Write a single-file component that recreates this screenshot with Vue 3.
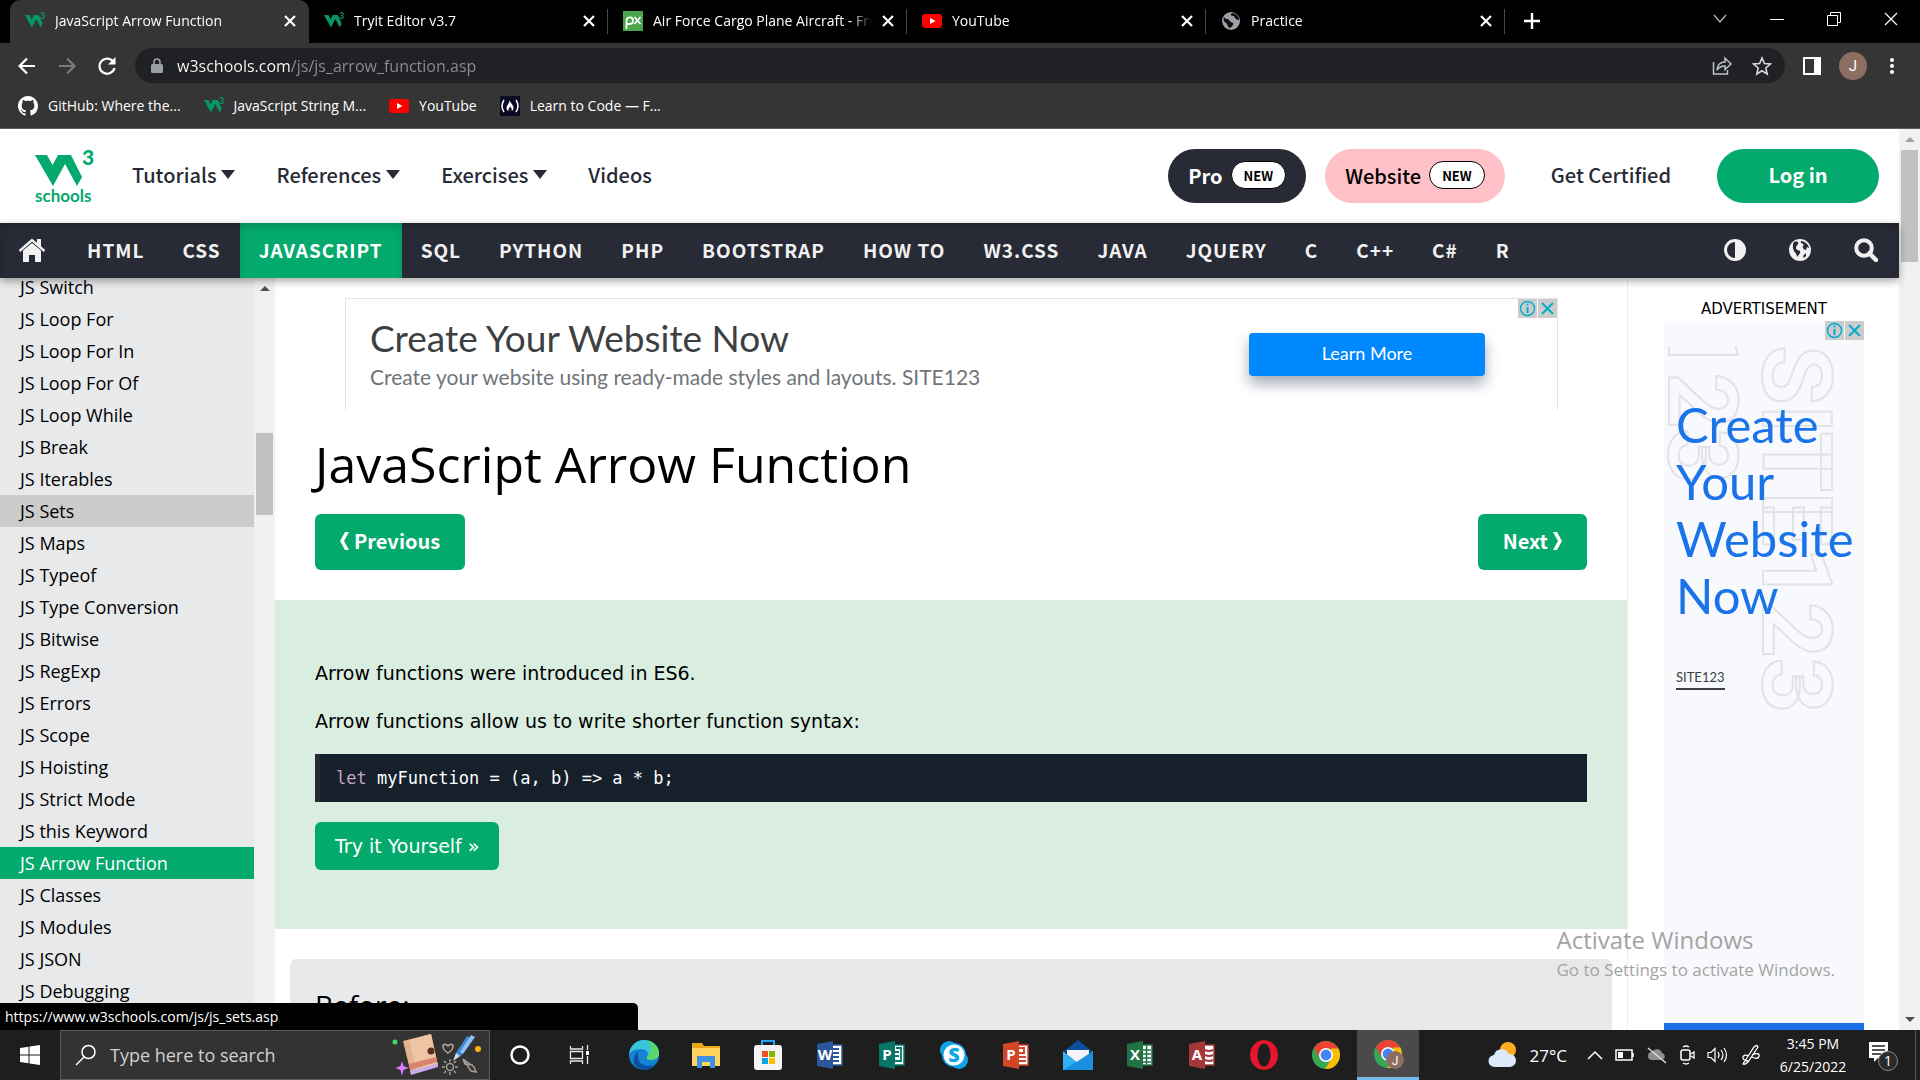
<script setup>
const tabs = [
  { icon: 'w3', title: 'JavaScript Arrow Function', active: true },
  { icon: 'w3', title: 'Tryit Editor v3.7' },
  { icon: 'px', title: 'Air Force Cargo Plane Aircraft - Free photo' },
  { icon: 'yt', title: 'YouTube' },
  { icon: 'globe', title: 'Practice' },
]

const bookmarks = [
  { icon: 'github', title: 'GitHub: Where the...' },
  { icon: 'w3', title: 'JavaScript String M...' },
  { icon: 'yt', title: 'YouTube' },
  { icon: 'fcc', title: 'Learn to Code — F...' },
]

const menus = ['Tutorials', 'References', 'Exercises']

const topics = [
  'HTML', 'CSS', 'JAVASCRIPT', 'SQL', 'PYTHON', 'PHP', 'BOOTSTRAP', 'HOW TO',
  'W3.CSS', 'JAVA', 'JQUERY', 'C', 'C++', 'C#', 'R',
]

const lessons = [
  'JS Switch', 'JS Loop For', 'JS Loop For In', 'JS Loop For Of', 'JS Loop While',
  'JS Break', 'JS Iterables', 'JS Sets', 'JS Maps', 'JS Typeof', 'JS Type Conversion',
  'JS Bitwise', 'JS RegExp', 'JS Errors', 'JS Scope', 'JS Hoisting', 'JS Strict Mode',
  'JS this Keyword', 'JS Arrow Function', 'JS Classes', 'JS Modules', 'JS JSON',
  'JS Debugging',
]

const apps = [
  { id: 'edge' }, { id: 'explorer' }, { id: 'store' },
  { id: 'office', letter: 'W', color: '#2b579a', name: 'Word' },
  { id: 'office', letter: 'P', color: '#077568', name: 'Publisher' },
  { id: 'skype' },
  { id: 'office', letter: 'P', color: '#d24726', name: 'PowerPoint' },
  { id: 'mail' },
  { id: 'office', letter: 'X', color: '#217346', name: 'Excel' },
  { id: 'office', letter: 'A', color: '#a4373a', name: 'Access' },
  { id: 'opera' }, { id: 'chrome' }, { id: 'chrome', active: true },
]
</script>

<template>
  <div class="screen">
    <svg class="defs" aria-hidden="true">
      <defs>
        <symbol id="w3" viewBox="0 0 20 20">
          <path d="M0 4h4.500l2.200 4.500 2-4.500h5l4 8.500-2 4-4.300-8.500-4.500 8.500z" fill="#059862" />
          <text x="15" y="8" font-size="9" font-weight="700" font-family="Lato, sans-serif" fill="#059862">3</text>
        </symbol>
        <symbol id="yt" viewBox="0 0 20 20">
          <rect x="0" y="3" width="20" height="14" rx="3" fill="#f00" />
          <path d="M8 7l5.500 3L8 13z" fill="#fff" />
        </symbol>
        <symbol id="px" viewBox="0 0 20 20">
          <rect width="20" height="20" fill="#4aa54a" />
          <path d="M3.500 18V9.500a3.300 3.300 0 1 1 3.300 3.500H4M11.500 6l6 7M17.500 6l-6 7" fill="none" stroke="#fff" stroke-width="1.800" />
        </symbol>
        <symbol id="globe" viewBox="0 0 20 20">
          <circle cx="10" cy="10" r="9" fill="#9aa0a6" />
          <path d="M3 6c2 3 4 1 5 3s3 2 4 3-1 4-3 5c-3-1-2-4-4-5s-3-3-2-6zM11 2c-2 1-1 3 1 3s1 2 3 3 3 2 3 0-3-6-7-6z" fill="#111" />
        </symbol>
        <symbol id="github" viewBox="0 0 16 16">
          <path fill="#fff" d="M8 0C3.580 0 0 3.580 0 8c0 3.540 2.290 6.530 5.470 7.590.4.070.55-.17.55-.38 0-.19-.01-.82-.01-1.490-2.010.37-2.530-.49-2.690-.94-.09-.23-.48-.94-.82-1.130-.28-.15-.68-.52-.01-.53.63-.01 1.080.58 1.230.82.72 1.210 1.870.87 2.330.66.07-.52.28-.87.51-1.070-1.780-.2-3.640-.89-3.640-3.950 0-.87.31-1.590.82-2.150-.08-.2-.36-1.020.08-2.120 0 0 .67-.21 2.200.82.64-.18 1.320-.27 2-.27s1.360.09 2 .27c1.530-1.040 2.200-.82 2.200-.82.44 1.100.16 1.920.08 2.120.51.56.82 1.270.82 2.150 0 3.070-1.870 3.750-3.650 3.950.29.25.54.73.54 1.480 0 1.070-.01 1.930-.01 2.200 0 .21.15.46.55.38A8.010 8.010 0 0 0 16 8c0-4.420-3.580-8-8-8z" />
        </symbol>
        <symbol id="fcc" viewBox="0 0 20 20">
          <rect width="20" height="20" fill="#0a0a23" />
          <path d="M4 4Q0 10 4 16M16 4q4 6 0 12" fill="none" stroke="#fff" stroke-width="1.500" />
          <path d="M9.500 4c.5 3 4 4.500 4 8 0 1.500-.8 2.500-2 3 1-2-.5-3-1.500-4.500-.5 2-2 2.500-1.500 4.500-1.200-.5-2-1.500-2-3 0-3 3-4 3-8z" fill="#fff" />
        </symbol>
      </defs>
    </svg>

    <!-- Browser window -->
    <header class="browser">
      <div class="tabstrip">
        <div v-for="(t, i) in tabs" :key="i" class="tab" :class="{ active: t.active }">
          <svg class="fav" aria-hidden="true"><use :href="'#' + t.icon" /></svg>
          <span class="tab-title">{{ t.title }}</span>
          <button class="plain" aria-label="Close tab">
            <svg width="12" height="12" viewBox="0 0 12 12"><path d="M1 1l10 10M11 1L1 11" stroke="#fff" stroke-width="2.200" /></svg>
          </button>
        </div>
        <button class="plain new-tab" aria-label="New tab">
          <svg width="16" height="16" viewBox="0 0 16 16"><path d="M8 0v16M0 8h16" stroke="#fff" stroke-width="2.400" /></svg>
        </button>
        <div class="window-buttons">
          <button class="plain" aria-label="Search tabs"><svg width="14" height="14" viewBox="0 0 14 14"><path d="M1 3l6 7 6-7" fill="none" stroke="#bbb" stroke-width="1.300" /></svg></button>
          <button class="plain" aria-label="Minimize"><svg width="14" height="14" viewBox="0 0 14 14"><path d="M0 7.500h14" stroke="#fff" /></svg></button>
          <button class="plain" aria-label="Restore"><svg width="14" height="14" viewBox="0 0 14 14"><path d="M.5 3.500h10v10H.5zM3.500 3V.5h10v10H11" fill="none" stroke="#fff" /></svg></button>
          <button class="plain" aria-label="Close"><svg width="14" height="14" viewBox="0 0 14 14"><path d="M1 1l12 12M13 1L1 13" stroke="#fff" stroke-width="1.200" /></svg></button>
        </div>
      </div>

      <div class="toolbar">
        <button class="plain tool" aria-label="Back"><svg width="18" height="18" viewBox="0 0 18 18"><path d="M17 9H2M9 1.500L1.500 9 9 16.500" fill="none" stroke="#fff" stroke-width="2.200" /></svg></button>
        <button class="plain tool" aria-label="Forward"><svg width="18" height="18" viewBox="0 0 18 18"><path d="M1 9h15M9 1.500L16.500 9 9 16.500" fill="none" stroke="#7b7b7b" stroke-width="2.200" /></svg></button>
        <button class="plain tool" aria-label="Reload"><svg width="18" height="18" viewBox="0 0 18 18"><path d="M15.500 5A7.600 7.600 0 1 0 16.500 11" fill="none" stroke="#fff" stroke-width="2.200" /><path d="M17.500 0v7.500H10z" fill="#fff" /></svg></button>
        <div class="omnibox">
          <svg width="12" height="16" viewBox="0 0 12 16" aria-hidden="true"><rect y="6" width="12" height="9" rx="1.500" fill="#9aa0a6" /><path d="M3 7V4a3 3 0 0 1 6 0v3" fill="none" stroke="#9aa0a6" stroke-width="1.600" /></svg>
          <input class="url" type="text" aria-label="Address" value="w3schools.com/js/js_arrow_function.asp" />
          <button class="plain" aria-label="Share"><svg width="20" height="20" viewBox="0 0 20 20"><path d="M1.500 6v12h14v-4M5 14c.5-5 3.500-8 8-8V2l6 6-6 5.500V10c-3.500 0-6 1-8 4z" fill="none" stroke="#bdc1c6" stroke-width="1.500" /></svg></button>
          <button class="plain" aria-label="Bookmark"><svg width="20" height="20" viewBox="0 0 20 20"><path d="M10 2l2.400 5.500 6 .5-4.600 4 1.400 6L10 14.800 4.800 18l1.400-6L1.600 8l6-.5z" fill="none" stroke="#d5d7d9" stroke-width="1.600" /></svg></button>
        </div>
        <button class="plain tool" aria-label="Side panel"><svg width="18" height="18" viewBox="0 0 18 18"><rect width="18" height="18" fill="#fff" /><rect x="2" y="2" width="9" height="14" fill="#353535" /></svg></button>
        <button class="plain avatar" aria-label="Profile">J</button>
        <button class="plain tool" aria-label="Menu"><svg width="6" height="18" viewBox="0 0 6 18"><circle cx="3" cy="3" r="2" fill="#fff" /><circle cx="3" cy="9" r="2" fill="#fff" /><circle cx="3" cy="15" r="2" fill="#fff" /></svg></button>
      </div>

      <nav class="bookmarks" aria-label="Bookmarks">
        <a v-for="b in bookmarks" :key="b.title" href="#">
          <svg class="fav" aria-hidden="true"><use :href="'#' + b.icon" /></svg>{{ b.title }}
        </a>
      </nav>
    </header>

    <!-- Web page -->
    <div class="viewport">
      <div class="page">
        <div class="site-header">
          <a class="logo" href="#" aria-label="w3schools">
            <svg width="60" height="56" viewBox="0 0 60 56">
              <path d="M1 7h12l5.500 10L24 7h13l11 22-5 9-12-22-12 22z" fill="#04aa6d" />
              <text x="48" y="17" font-size="21" font-weight="900" font-family="Lato, sans-serif" fill="#04aa6d">3</text>
              <text x="1" y="54" font-size="17" font-weight="700" font-family="Lato, sans-serif" fill="#04aa6d">schools</text>
            </svg>
          </a>
          <a v-for="m in menus" :key="m" class="menu" href="#">{{ m }}<svg width="14" height="9" viewBox="0 0 14 9" aria-hidden="true"><path d="M0 0h14L7 9z" fill="#282a35" /></svg></a>
          <a class="menu" href="#">Videos</a>
          <div class="header-right">
            <a class="pill dark" href="#">Pro <span class="new">NEW</span></a>
            <a class="pill pink" href="#">Website <span class="new">NEW</span></a>
            <a class="certified" href="#">Get Certified</a>
            <button class="login">Log in</button>
          </div>
        </div>

        <nav class="topnav" aria-label="Topics">
          <a class="home" href="#" aria-label="Home"><svg width="28" height="24" viewBox="0 0 28 24"><path d="M14 5l9 7.500V24h-6v-7h-6v7H5V12.500z" fill="#f1f1f1" /><path d="M1.500 13L14 2l12.500 11" fill="none" stroke="#f1f1f1" stroke-width="2.400" /><path d="M19 1h4v8l-4-3.500z" fill="#f1f1f1" /></svg></a>
          <a v-for="t in topics" :key="t" href="#" :class="{ current: t === 'JAVASCRIPT' }">{{ t }}</a>
          <div class="nav-tools">
            <button class="plain" aria-label="Toggle dark code"><svg width="22" height="22" viewBox="0 0 22 22"><circle cx="11" cy="11" r="9.500" fill="none" stroke="#f1f1f1" stroke-width="3" /><path d="M11 1a10 10 0 0 1 0 20z" fill="#f1f1f1" /></svg></button>
            <button class="plain" aria-label="Translate"><svg width="22" height="22" viewBox="0 0 22 22"><circle cx="11" cy="11" r="11" fill="#f1f1f1" /><path d="M5 3c3-1 5 0 4 2S7 7 7 9s3 2 4 3-1 4-3 6c0-3-2-4-3-6S3 6 5 3zM12 2c4 0 8 4 8 7l-2-1-1 3c-2 0-4-2-3-4s1-1 0-2-3-1-2-3zM14 17l3-3v3l-2 2z" fill="#282a35" /></svg></button>
            <button class="plain" aria-label="Search"><svg width="24" height="24" viewBox="0 0 24 24"><circle cx="10" cy="10" r="7.800" fill="none" stroke="#f1f1f1" stroke-width="4" /><path d="M15.500 15.500l6.500 6.500" stroke="#f1f1f1" stroke-width="4.500" stroke-linecap="round" /></svg></button>
          </div>
        </nav>

        <div class="columns">
          <aside class="sidebar">
            <ul class="lessons">
              <li v-for="l in lessons" :key="l">
                <a href="#" :class="{ hovered: l === 'JS Sets', current: l === 'JS Arrow Function' }">{{ l }}</a>
              </li>
            </ul>
          </aside>
          <div class="scrollbar side-scroll" aria-hidden="true">
            <i class="arrow-up"></i><i class="thumb"></i>
          </div>

          <main class="content">
            <section class="banner">
              <div class="banner-text">
                <div class="banner-title">Create Your Website Now</div>
                <div class="banner-sub">Create your website using ready-made styles and layouts. SITE123</div>
              </div>
              <button class="learn">Learn More</button>
              <div class="ad-marks">
                <svg width="19" height="19" viewBox="0 0 19 19"><rect width="19" height="19" fill="#ccc" /><circle cx="9.500" cy="9.500" r="7" fill="none" stroke="#00aecd" stroke-width="1.500" /><path d="M9.500 8v6M9.500 4.500v2" stroke="#00aecd" stroke-width="2" /></svg>
                <svg width="19" height="19" viewBox="0 0 19 19"><rect width="19" height="19" fill="#ccc" /><path d="M4 4l11 11M15 4L4 15" stroke="#00aecd" stroke-width="2" /></svg>
              </div>
            </section>

            <h1>JavaScript Arrow Function</h1>
            <div class="pager">
              <a class="btn" href="#"><svg width="9" height="18" viewBox="0 0 9 18" aria-hidden="true"><path d="M5 0h4L4 9l5 9H5L0 9z" fill="#fff" /></svg>Previous</a>
              <a class="btn" href="#">Next<svg width="9" height="18" viewBox="0 0 9 18" aria-hidden="true"><path d="M4 0H0l5 9-5 9h4l5-9z" fill="#fff" /></svg></a>
            </div>

            <section class="intro">
              <p>Arrow functions were introduced in ES6.</p>
              <p>Arrow functions allow us to write shorter function syntax:</p>
              <pre class="code"><span class="kw">let</span> myFunction = (a, b) =&gt; a * b;</pre>
              <a class="try" href="#">Try it Yourself »</a>
            </section>

            <section class="example"><h3>Before:</h3></section>
          </main>

          <aside class="ads">
            <div class="ads-label">ADVERTISEMENT</div>
            <div class="sky">
              <svg class="outline" width="200" height="400" viewBox="0 0 200 400" aria-hidden="true">
                <defs><clipPath id="cut"><rect y="25" width="200" height="375" /></clipPath></defs>
                <g fill="none" stroke="#e1e3e6" stroke-width="2" font-family="Roboto, sans-serif" font-weight="700" font-size="97">
                  <text transform="translate(99 24) rotate(90)">SITE123</text>
                  <g clip-path="url(#cut)"><text transform="translate(5 -4) rotate(90)">123</text></g>
                </g>
              </svg>
              <div class="ad-marks">
                <svg width="19" height="19" viewBox="0 0 19 19"><rect width="19" height="19" fill="#ccc" /><circle cx="9.500" cy="9.500" r="7" fill="none" stroke="#00aecd" stroke-width="1.500" /><path d="M9.500 8v6M9.500 4.500v2" stroke="#00aecd" stroke-width="2" /></svg>
                <svg width="19" height="19" viewBox="0 0 19 19"><rect width="19" height="19" fill="#ccc" /><path d="M4 4l11 11M15 4L4 15" stroke="#00aecd" stroke-width="2" /></svg>
              </div>
              <div class="sky-title">Create<br />Your<br />Website<br />Now</div>
              <a class="sky-link" href="#">SITE123</a>
              <div class="sky-cta"></div>
            </div>
          </aside>
        </div>
      </div>
      <div class="scrollbar page-scroll" aria-hidden="true">
        <i class="arrow-up"></i><i class="thumb"></i><i class="arrow-down"></i>
      </div>

      <div class="status">https://www.w3schools.com/js/js_sets.asp</div>
      <div class="activate">
        <div class="activate-title">Activate Windows</div>
        <div>Go to Settings to activate Windows.</div>
      </div>
    </div>

    <!-- Windows taskbar -->
    <footer class="taskbar">
      <button class="plain start" aria-label="Start"><svg width="20" height="20" viewBox="0 0 20 20"><path d="M0 3l8.500-1.300v7.800H0zM9.500 1.500L20 0v9.500H9.500zM0 10.500h8.500v7.800L0 17zM9.500 10.500H20V20L9.500 18.500z" fill="#fff" /></svg></button>
      <label class="search">
        <svg width="22" height="22" viewBox="0 0 22 22" aria-hidden="true"><circle cx="13.500" cy="8" r="6.500" fill="none" stroke="#fff" stroke-width="1.500" /><path d="M9 13l-8 8" stroke="#fff" stroke-width="1.500" /></svg>
        <input type="text" placeholder="Type here to search" aria-label="Type here to search" />
        <svg class="doodle" width="94" height="44" viewBox="0 0 94 44" aria-hidden="true">
          <circle cx="4" cy="9" r="2.500" fill="#3ddc6b" />
          <path d="M11 28l1.500 5 5 2-5 2-1.500 6-1.500-6-5-2 5-2z" fill="#e07aff" />
          <path d="M12 8L40 1l7 32-27 8z" fill="#e2b48f" /><path d="M18 7l22-6 7 32-21 6z" fill="#edc4a4" />
          <path d="M18 31l27-7 1 5-27 8z" fill="#d9836c" /><path d="M19 38l27-7 1 3-27 8z" fill="#c9a9ee" />
          <circle cx="40" cy="18" r="3.500" fill="#5a2e1c" />
          <path d="M57 20c-9-6-4-12 0-7 4-5 9 1 0 7z" fill="none" stroke="#b7aaa5" stroke-width="1.500" />
          <path d="M76 3l6 3-12 17-6 3 1-6z" fill="#3f86d8" /><path d="M80 2l4 2-12 17-3-2z" fill="#8fc0f5" /><path d="M65 20l4 3-7 5z" fill="#d5dbe3" />
          <circle cx="87" cy="16" r="3" fill="#ffb414" />
          <circle cx="59" cy="34" r="3.500" fill="none" stroke="#a99d98" stroke-width="1.500" />
          <path d="M59 26v3M59 39v3M51 34h3M64 34h3M53 28l2 2M65 28l-2 2M53 40l2-2M65 40l-2-2" stroke="#a99d98" stroke-width="1.500" />
          <path d="M72 26l11 8 2 5-5-1zM72 26l2 5 8 1" fill="none" stroke="#a99d98" stroke-width="1.500" />
        </svg>
      </label>
      <button class="plain sys" aria-label="Cortana"><svg width="22" height="22" viewBox="0 0 22 22"><circle cx="11" cy="11" r="8.500" fill="none" stroke="#fff" stroke-width="2.500" /></svg></button>
      <button class="plain sys" aria-label="Task view"><svg width="22" height="22" viewBox="0 0 22 22"><path d="M1.500 2v3h12V2M1.500 20v-3h12v3M1.500 7.500h12v7h-12zM18.500 1v5M18.500 12v8" fill="none" stroke="#e8e8e8" stroke-width="1.300" /><rect x="17" y="7" width="3" height="4" fill="#fff" /></svg></button>

      <div class="apps">
        <button v-for="(a, i) in apps" :key="i" class="plain app" :class="{ active: a.active }" :aria-label="a.name || a.id">
          <svg width="32" height="32" viewBox="0 0 32 32">
            <template v-if="a.id === 'office'">
              <rect x="14" y="6" width="14" height="20" fill="#fff" :stroke="a.color" stroke-width="1.500" />
              <path v-if="a.name === 'Word'" d="M18 10h7M18 14h7M18 18h7M18 22h7" :stroke="a.color" stroke-width="2" />
              <path v-else-if="a.name === 'Publisher'" d="M20 9h5v13h-6M19 13h4M19 17h4" fill="none" :stroke="a.color" stroke-width="1.800" />
              <path v-else-if="a.name === 'PowerPoint'" d="M19 9h5v5h-5M19 18h7M19 22h7" fill="none" :stroke="a.color" stroke-width="2" />
              <path v-else-if="a.name === 'Excel'" d="M22.500 7v18M19 11h8M19 15h8M19 19h8M19 23h8" :stroke="a.color" stroke-width="1.500" />
              <path v-else d="M19 11q4 2 8 0M19 16q4 2 8 0M19 21q4 2 8 0" fill="none" :stroke="a.color" stroke-width="2" />
              <path d="M3 5l16-3v28L3 27z" :fill="a.color" />
              <text x="11" y="21" text-anchor="middle" font-size="15" font-weight="700" font-family="Open Sans, sans-serif" fill="#fff">{{ a.letter }}</text>
            </template>
            <template v-else-if="a.id === 'edge'">
              <circle cx="16" cy="16" r="15" fill="#1583d4" />
              <path d="M1 16C2 5 10 1 16 1c9 0 15 6 15 13 0 5-4 7-8 7-3 0-5-1-4-3 3-4-1-8-5-8C7 10 2 12 1 16z" fill="#37c6d8" />
              <path d="M19 1.400c8 1.600 12 7.600 12 12.600 0 5-4 7-8 7-3 0-5-1-4-3 5-5 6-10 0-16.600z" fill="#5ad66a" />
              <path d="M10 17c0 8 7 12 17 9-4 5-10 6-15 4C5 27 3 19 10 12z" fill="#0b4fa0" />
            </template>
            <template v-else-if="a.id === 'explorer'">
              <path d="M2 4h10l2 3h16v20H2z" fill="#e9a81b" /><path d="M2 9h28v18H2z" fill="#ffd35c" />
              <path d="M7 29V17h18v12h-5v-6h-8v6z" fill="#3c92e0" />
            </template>
            <template v-else-if="a.id === 'store'">
              <path d="M10 8V2h12v6" fill="none" stroke="#22a7f2" stroke-width="2" /><rect x="2" y="6" width="28" height="25" rx="3" fill="#f4f4f4" />
              <path d="M10 12h6v6h-6z" fill="#f25022" /><path d="M17 12h6v6h-6z" fill="#7fba00" /><path d="M10 19h6v6h-6z" fill="#00a4ef" /><path d="M17 19h6v6h-6z" fill="#ffb900" />
            </template>
            <template v-else-if="a.id === 'skype'">
              <circle cx="11" cy="11" r="9" fill="#0da5e8" /><circle cx="21" cy="21" r="9" fill="#0da5e8" /><circle cx="16" cy="16" r="12" fill="#0da5e8" />
              <circle cx="16" cy="16" r="10.500" fill="#fff" />
              <text x="16" y="23" text-anchor="middle" font-size="20" font-weight="800" font-family="Open Sans, sans-serif" fill="#0da5e8">S</text>
            </template>
            <template v-else-if="a.id === 'mail'">
              <path d="M1 13L16 1l15 12z" fill="#0b4f9e" /><path d="M5 11h22v12H5z" fill="#f3f5f7" /><path d="M1 12l15 12 15-12v19H1z" fill="#2fb1f1" /><path d="M1 31l15-9L31 12v19z" fill="#1b90e0" />
            </template>
            <template v-else-if="a.id === 'opera'">
              <ellipse cx="16" cy="16" rx="14" ry="15" fill="#e3162b" /><ellipse cx="16" cy="16" rx="6.500" ry="11.500" fill="#1e1e1e" />
            </template>
            <template v-else>
              <circle cx="16" cy="16" r="14" fill="#34a853" />
              <path d="M3.900 9A14 14 0 0 1 28.100 9L28 10H16L9.500 19z" fill="#ea4335" />
              <path d="M28.300 9.500A14 14 0 0 1 15 30l7-11-1-9.500z" fill="#fbbc05" />
              <circle cx="16" cy="16" r="7" fill="#fff" /><circle cx="16" cy="16" r="5.400" fill="#4285f4" />
              <template v-if="a.active">
                <circle cx="23" cy="22" r="9" fill="#8d6e63" /><text x="23" y="27" text-anchor="middle" font-size="12" font-family="Roboto, sans-serif" fill="#fff">J</text>
              </template>
            </template>
          </svg>
        </button>
      </div>

      <div class="tray">
        <svg width="30" height="30" viewBox="0 0 30 30" aria-hidden="true"><circle cx="20" cy="10" r="8" fill="#ffad1f" /><path d="M7 27a6 6 0 0 1-1-12 8 8 0 0 1 15-1 6.500 6.500 0 0 1 1 13z" fill="#dbe9fb" /></svg>
        <span class="temp">27°C</span>
        <svg width="16" height="10" viewBox="0 0 16 10" aria-hidden="true"><path d="M1 9l7-7 7 7" fill="none" stroke="#fff" stroke-width="1.500" /></svg>
        <svg width="20" height="12" viewBox="0 0 20 12" aria-hidden="true"><path d="M1 1h16v10H1zM18 4v4" fill="none" stroke="#fff" stroke-width="1.500" /><rect x="3" y="3" width="5" height="6" fill="#fff" /></svg>
        <svg width="20" height="18" viewBox="0 0 20 18" aria-hidden="true"><path d="M5 14a4 4 0 0 1 0-8 5.500 5.500 0 0 1 10 1 3.600 3.600 0 0 1 0 7z" fill="#8f8f8f" /><path d="M1 2l18 15" stroke="#ddd" stroke-width="1.500" /></svg>
        <svg width="16" height="20" viewBox="0 0 16 20" aria-hidden="true"><rect x="2" y="5" width="9" height="10" rx="2" fill="none" stroke="#fff" stroke-width="1.500" /><path d="M12 9l3-2v6l-3-2M4 2q3-2 6 0M4 18q3 2 6 0" fill="none" stroke="#fff" stroke-width="1.300" /></svg>
        <svg width="22" height="18" viewBox="0 0 22 18" aria-hidden="true"><path d="M1 6.500h3l4-4v13l-4-4H1zM11 6q2 3 0 6M14 4q4 5 0 10M17 2q5 7 0 14" fill="none" stroke="#fff" stroke-width="1.200" /></svg>
        <svg width="20" height="22" viewBox="0 0 20 22" aria-hidden="true"><path d="M2 20L13 3q3-3 4 0L7 18q-3 3-5 2zM7 17q-6-1-5-4t6-1M11 11q8-3 7 1t-7 1" fill="none" stroke="#fff" stroke-width="1.300" /></svg>
        <div class="clock"><span>3:45 PM</span><span>6/25/2022</span></div>
        <svg width="32" height="32" viewBox="0 0 32 32" aria-hidden="true"><path d="M2 3h19v16H11l-4 4v-4H2z" fill="#fff" /><path d="M5 7h13M5 11h13M5 15h9" stroke="#1e1e1e" stroke-width="1.500" /><circle cx="21" cy="22" r="9.500" fill="#2a2a2a" stroke="#8a8a8a" /><text x="21" y="27" text-anchor="middle" font-size="14" font-family="Open Sans, sans-serif" fill="#fff">1</text></svg>
      </div>
    </footer>
  </div>
</template>

<style>
body {
  background: #000;
}
</style>

<style scoped>
.screen {
  --segoe: "Open Sans", "Noto Sans", sans-serif;
  --source: "Noto Sans CJK SC", "Noto Sans", sans-serif;
  --verdana: "DejaVu Sans", sans-serif;
  --green: #04aa6d;
  height: 100vh;
  display: flex;
  flex-direction: column;
  overflow: hidden;
  font-family: var(--segoe);
  color: #000;
}
.screen *, .screen *::before { box-sizing: border-box; }
.defs { position: absolute; width: 0; height: 0; }
a { color: inherit; text-decoration: none; }
svg { flex: none; }
.plain {
  display: flex;
  align-items: center;
  justify-content: center;
  flex: none;
  padding: 0;
  border: 0;
  background: none;
  font: inherit;
  color: inherit;
}
.fav { width: 20px; height: 20px; }

/* browser frame */
.browser { flex: none; background: #353535; border-bottom: 1px solid #5c5c5c; color: #fff; font-size: 14px; }
.tabstrip { display: flex; height: 43px; padding-left: 10px; background: #000; }
.tab {
  display: flex;
  align-items: center;
  flex: 0 1 299px;
  min-width: 0;
  padding: 0 13px 2px 15px;
  position: relative;
}
.tab:not(.active)::after {
  content: "";
  position: absolute;
  right: 0;
  top: 9px;
  height: 25px;
  width: 1px;
  background: #4a4a4a;
}
.tab.active { background: #353535; border-radius: 10px 10px 0 0; }
.tab-title {
  flex: 1;
  min-width: 0;
  margin: 0 10px;
  overflow: hidden;
  white-space: nowrap;
  mask-image: linear-gradient(to right, #000 90%, transparent);
}
.new-tab { width: 54px; padding-bottom: 2px; }
.window-buttons { display: flex; margin-left: auto; padding: 0 1px 6px 0; }
.window-buttons .plain { width: 57px; }
.toolbar { display: flex; align-items: center; height: 43px; padding: 5px 8px 3px 7px; }
.tool { width: 40px; height: 35px; }
.omnibox {
  flex: 1;
  display: flex;
  align-items: center;
  gap: 20px;
  height: 35px;
  margin: 0 7px 0 8px;
  padding: 0 13px 0 16px;
  border-radius: 18px;
  background: #202124;
}
.url {
  flex: 1;
  min-width: 0;
  margin-left: -6px;
  padding: 0;
  border: 0;
  outline: 0;
  font: 16px var(--segoe);
  color: transparent;
  background: linear-gradient(to right, #fff 113px, #8d8f92 113px);
  background-clip: text;
}
.avatar { width: 28px; height: 28px; margin: 0 5px 0 7px; border-radius: 50%; background: #8d6e63; font-family: Roboto, sans-serif; font-size: 15px; }
.bookmarks { display: flex; align-items: center; gap: 23px; height: 42px; padding: 0 18px 3px; }
.bookmarks a { display: flex; align-items: center; gap: 10px; }

/* page frame */
.viewport { flex: 1; min-height: 0; display: flex; position: relative; background: #fff; }
.page { flex: 1; min-width: 0; display: flex; flex-direction: column; }
.scrollbar { flex: none; width: 21px; display: flex; flex-direction: column; align-items: center; background: #f1f1f1; }
.scrollbar i { flex: none; }
.arrow-up { border: 5px solid transparent; border-top: 0; border-bottom-color: #505050; margin-top: 8px; }
.arrow-down { border: 5px solid transparent; border-bottom: 0; border-top-color: #505050; margin: auto 0 8px; }
.thumb { width: 17px; background: #c1c1c1; }
.page-scroll .arrow-up { border-bottom-color: #a3a3a3; }
.page-scroll .thumb { height: 112px; margin-top: 8px; }
.side-scroll .thumb { height: 82px; margin-top: 142px; }

.site-header {
  flex: none;
  display: flex;
  align-items: center;
  height: 94px;
  padding: 0 20px 0 34px;
  font: 500 20px var(--source);
  color: #282a35;
}
.logo { display: flex; margin-right: 38px; }
.menu { display: flex; align-items: center; gap: 5px; margin-right: 41px; padding-bottom: 3px; white-space: nowrap; }
.header-right { display: flex; align-items: center; margin-left: auto; white-space: nowrap; }
.pill { display: flex; align-items: center; gap: 8px; height: 54px; padding: 0 20px 2px; border-radius: 27px; margin-right: 19px; }
.dark { background: #282a35; color: #fff; font-weight: 700; }
.pink { background: #ffc0c7; color: #000; }
.new {
  display: flex;
  align-items: center;
  height: 28px;
  padding: 0 12px;
  border: 1px solid #000;
  border-radius: 14px;
  background: #fff;
  color: #000;
  font-size: 13px;
  font-weight: 700;
}
.certified { margin: 0 46px 0 27px; padding-bottom: 3px; }
.login { width: 162px; height: 54px; padding: 0 0 3px; border: 0; border-radius: 27px; background: var(--green); color: #fff; font: 700 20px var(--source); }

.topnav {
  flex: none;
  display: flex;
  height: 55px;
  position: relative;
  z-index: 1;
  background: #282a35;
  color: #f1f1f1;
  font: 700 19px var(--source);
  letter-spacing: 1px;
  box-shadow: 0 3px 8px rgba(0, 0, 0, 0.35), inset 0 5px 6px rgba(0, 0, 0, 0.15);
}
.topnav > a { display: flex; align-items: center; padding: 0 19px 2px; white-space: nowrap; }
.topnav .home { padding: 0 22px 2px 18px; }
.topnav .current { background: var(--green); color: #fff; box-shadow: inset 0 5px 6px rgba(0, 0, 0, 0.15); }
.nav-tools { display: flex; gap: 43px; margin-left: auto; padding: 0 21px 2px 0; }

.columns { flex: 1; min-height: 0; display: flex; }
.sidebar { flex: none; width: 254px; overflow: hidden; background: #e7e9eb; }
.lessons { list-style: none; margin: -7px 0 0; padding: 0; font-size: 18px; line-height: 32px; }
.lessons a { display: block; padding-left: 20px; }
.lessons .hovered { background: #ccc; }
.lessons .current { background: var(--green); color: #fff; }

.content { flex: 1; min-width: 0; overflow: hidden; }
.banner {
  position: relative;
  display: flex;
  justify-content: space-between;
  height: 112px;
  margin: 20px 69px 0 70px;
  padding: 0 72px 0 24px;
  border: 1px solid #e4e4e4;
  border-bottom: 0;
  font-family: Lato, sans-serif;
}
.banner-title { margin-top: 17px; font-size: 37px; line-height: 44px; color: #3c4043; }
.banner-sub { font-size: 21px; line-height: 33px; color: #70757a; }
.learn {
  width: 236px;
  height: 43px;
  margin-top: 34px;
  padding: 0 0 3px;
  border: 0;
  border-radius: 4px;
  background: #0088ff;
  color: #fff;
  font: 18px Lato, sans-serif;
  box-shadow: 0 8px 14px rgba(40, 50, 80, 0.4);
}
.ad-marks { position: absolute; top: 0; right: 0; display: flex; gap: 1px; }
h1 { margin: 16px 40px 12px; font-size: 50px; font-weight: 400; line-height: 76px; }
.pager { display: flex; justify-content: space-between; margin: 0 40px 30px; }
.btn {
  display: flex;
  align-items: center;
  gap: 5px;
  height: 56px;
  padding: 0 25px 3px;
  border-radius: 6px;
  background: var(--green);
  color: #fff;
  font: 700 20px var(--source);
}
.intro { padding: 58px 40px; height: 329px; background: #d9ede1; font-family: var(--verdana); font-size: 19px; }
.intro p { margin: 0 0 18px; line-height: 30px; }
.code {
  margin: 0 0 20px;
  padding: 0 16px;
  border-left: 5px solid #282a35;
  background: #15202b;
  color: #fff;
  font: 17px "DejaVu Sans Mono", monospace;
  line-height: 48px;
}
.kw { color: #c5a5c5; }
.try { display: inline-block; padding: 0 20px; border-radius: 6px; background: var(--green); color: #fff; line-height: 48px; }
.example { margin: 30px 15px 0; height: 200px; padding: 24px 25px; border-radius: 6px; background: #e7e9eb; }
h3 { margin: 0; font-size: 28px; font-weight: 400; line-height: 44px; }

.ads { flex: none; width: 272px; display: flex; flex-direction: column; padding: 20px 35px 0 36px; border-left: 1px solid #eee; }
.ads-label { text-align: center; font: 15px var(--verdana); line-height: 23px; }
.sky { flex: 1; position: relative; display: flex; flex-direction: column; align-items: flex-start; background: #f8f9fc; font-family: Lato, sans-serif; }
.outline { position: absolute; top: 0; left: 0; }
.sky-title { position: relative; margin: 75px 0 0 12px; font-size: 49px; line-height: 57px; color: #1a73e8; }
.sky-link { margin: 42px 0 0 12px; border-bottom: 2px solid #3c4043; font-size: 13px; line-height: 22px; color: #3c4043; }
.sky-cta { align-self: stretch; height: 7px; margin-top: auto; background: #1a73e8; }

.status {
  position: absolute;
  left: 0;
  bottom: 0;
  width: 638px;
  padding: 0 5px;
  border-top-right-radius: 5px;
  background: #000;
  color: #fff;
  font-size: 14px;
  line-height: 27px;
}
.activate { position: absolute; right: 85px; bottom: 47px; color: #a3a3a3; font-size: 17px; line-height: 27px; }
.activate-title { font-size: 24px; line-height: 32px; }

/* taskbar */
.taskbar { flex: none; display: flex; height: 50px; background: #1e1e1e; color: #fff; }
.start { width: 60px; }
.search { display: flex; align-items: center; width: 430px; padding: 0 4px 0 14px; border: 1px solid #5a5a5a; background: #333; }
.search input { flex: 1; min-width: 0; padding: 0; margin-left: 13px; border: 0; outline: 0; background: none; font: 18px var(--segoe); color: #fff; }
.search input::placeholder { color: #d0d0d0; opacity: 1; }
.sys { width: 60px; }
.apps { display: flex; margin-left: 3px; }
.app { width: 62px; }
.app.active { background: #4a4a4a; border-bottom: 3px solid #76b9ed; }
.tray { display: flex; align-items: center; margin-left: auto; padding-right: 16px; gap: 12px; border-right: 1px solid #555; margin-right: 4px; font-size: 14px; }
.temp { font-size: 17px; margin-right: 8px; }
.clock { display: flex; flex-direction: column; align-items: center; width: 80px; margin-right: 2px; line-height: 23px; }
</style>
